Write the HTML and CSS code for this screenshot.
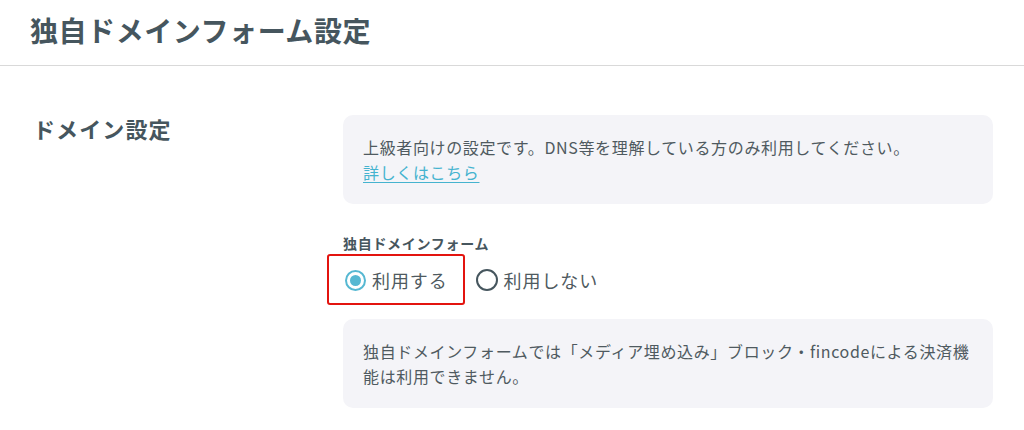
FILE: index.html
```html
<!DOCTYPE html>
<html lang="ja">
<head>
<meta charset="utf-8">
<title>独自ドメインフォーム設定</title>
<link rel="stylesheet" href="styles.css">
</head>
<body>
<header class="page-header">
  <h1 class="page-title">独自ドメインフォーム設定</h1>
</header>
<section class="setting">
  <h2 class="setting-title">ドメイン設定</h2>
  <div class="setting-body">
    <div class="notice">
      <p>上級者向けの設定です。DNS等を理解している方のみ利用してください。</p>
      <a class="notice-link" href="#">詳しくはこちら</a>
    </div>
    <div class="field-label">独自ドメインフォーム</div>
    <div class="radio-group">
      <label class="radio-option highlighted">
        <span class="radio checked"></span>
        <span class="radio-text">利用する</span>
      </label>
      <label class="radio-option">
        <span class="radio"></span>
        <span class="radio-text">利用しない</span>
      </label>
    </div>
    <div class="notice notice-bottom">
      <p>独自ドメインフォームでは「メディア埋め込み」ブロック・fincodeによる決済機能は利用できません。</p>
    </div>
  </div>
</section>
</body>
</html>
```

FILE: styles.css
```css
* { box-sizing: border-box; }

body {
  margin: 0;
  background: #ffffff;
  color: #4f5a60;
  font-family: "Noto Sans CJK JP", "Noto Sans", sans-serif;
}

.page-header {
  height: 66px;
  border-bottom: 1px solid #d9d9d9;
  padding: 10px 0 0 30px;
}

.page-title {
  margin: 0;
  font-size: 28px;
  line-height: 40px;
  font-weight: 700;
  letter-spacing: 0.02em;
  color: #46565e;
}

.setting {
  display: grid;
  grid-template-columns: 310px 650px;
  padding: 48px 31px 0 33px;
}

.setting-title {
  margin: 0;
  font-size: 22px;
  line-height: 28px;
  font-weight: 700;
  letter-spacing: 0.05em;
  color: #46565e;
}

.setting-body {
  display: flex;
  flex-direction: column;
  padding-top: 1px;
}

.notice {
  background: #f4f4f8;
  border-radius: 10px;
  padding: 20px 14px 20px 20px;
  font-size: 16px;
  line-height: 24.5px;
  letter-spacing: 0.04em;
  color: #4f5a60;
}

.notice p { margin: 0; }

.notice-link {
  color: #45b3cf;
  text-decoration: underline;
  text-underline-offset: 3px;
}

.field-label {
  margin-top: 29px;
  font-size: 14px;
  line-height: 20px;
  font-weight: 700;
  letter-spacing: 0.05em;
  color: #46565e;
}

.radio-group {
  display: flex;
  gap: 28px;
  margin-top: 14px;
  padding-left: 2px;
}

.radio-option {
  position: relative;
  display: flex;
  align-items: center;
  gap: 6px;
  height: 26px;
  font-size: 18px;
  line-height: 26px;
  letter-spacing: 0.05em;
  color: #4f5a60;
}

.radio {
  width: 22px;
  height: 22px;
  border-radius: 50%;
  border: 2.5px solid #46565e;
  display: flex;
  align-items: center;
  justify-content: center;
  flex: none;
}

.radio.checked {
  width: 21px;
  height: 21px;
  border-color: #56b8d2;
}

.radio.checked::before {
  content: "";
  width: 11px;
  height: 11px;
  border-radius: 50%;
  background: #56b8d2;
}

.highlighted::after {
  content: "";
  position: absolute;
  top: -13px;
  bottom: -12px;
  left: -18px;
  right: -17px;
  border: 2px solid #e3140f;
  border-radius: 3px;
}

.notice-bottom {
  margin-top: 26px;
}
```
